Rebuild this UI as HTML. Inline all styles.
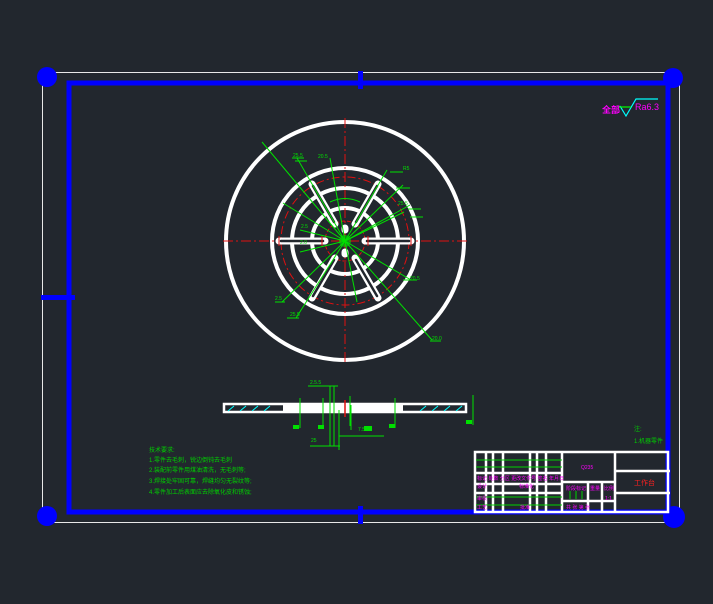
<!DOCTYPE html>
<html><head><style>html,body{margin:0;padding:0;background:#22272e;width:713px;height:604px;overflow:hidden}</style></head>
<body>
<svg width="713" height="604" viewBox="0 0 713 604" xmlns="http://www.w3.org/2000/svg" font-family="Liberation Sans, Noto Sans CJK SC, sans-serif">
<rect width="713" height="604" fill="#22272e"/>
<rect x="42.5" y="72.5" width="637" height="450" fill="none" stroke="#e8e8e8" stroke-width="1"/>
<rect x="69" y="83" width="599" height="429" fill="none" stroke="#0000ff" stroke-width="5"/>
<circle cx="47" cy="77" r="10" fill="#0000ff"/><circle cx="673" cy="78" r="10" fill="#0000ff"/>
<circle cx="47" cy="516" r="10" fill="#0000ff"/><circle cx="674" cy="517" r="11" fill="#0000ff"/>
<rect x="358" y="71" width="5" height="18" fill="#0000ff"/><rect x="358" y="506" width="5" height="18" fill="#0000ff"/>
<rect x="41" y="295" width="34" height="5" fill="#0000ff"/>
<text x="602" y="113" font-size="9" fill="#ff00ff" font-weight="bold">全部</text>
<path d="M620 106 L626 116 L636 99 L658 99" fill="none" stroke="#00ffff" stroke-width="1.2"/>
<path d="M619 107 L631 107" stroke="#00ff00" stroke-width="1.2"/>
<text x="635" y="110" font-size="9" fill="#ff00ff">Ra6.3</text>
<g fill="none">
<circle cx="345" cy="241" r="119" stroke="#fff" stroke-width="4"/>
<circle cx="345" cy="241" r="73" stroke="#fff" stroke-width="4"/>
<circle cx="345" cy="241" r="53" stroke="#fff" stroke-width="4"/>
<circle cx="345" cy="241" r="33" stroke="#fff" stroke-width="4"/>
<circle cx="345" cy="241" r="64" stroke="#e01010" stroke-width="1" stroke-dasharray="8 3 2 3"/>
<circle cx="345" cy="241" r="20" stroke="#e01010" stroke-width="1" stroke-dasharray="4 2"/>
<line x1="223" y1="241" x2="468" y2="241" stroke="#e01010" stroke-dasharray="10 3 2 3"/>
<line x1="345" y1="118" x2="345" y2="364" stroke="#e01010" stroke-dasharray="10 3 2 3"/>
</g>
<g stroke="#fff" stroke-width="7" stroke-linecap="round">
<line x1="279" y1="241" x2="325" y2="241"/><line x1="365" y1="241" x2="411" y2="241"/>
<line x1="312" y1="184" x2="335" y2="224"/><line x1="378" y1="184" x2="355" y2="224"/>
<line x1="312" y1="298" x2="335" y2="258"/><line x1="378" y1="298" x2="355" y2="258"/>
<line x1="345" y1="228" x2="345" y2="230"/><line x1="345" y1="252" x2="345" y2="254"/>
</g>
<g stroke="#22272e" stroke-width="2.5" stroke-linecap="round">
<line x1="281" y1="241" x2="323" y2="241"/><line x1="367" y1="241" x2="409" y2="241"/>
<line x1="313" y1="186" x2="334" y2="222"/><line x1="377" y1="186" x2="356" y2="222"/>
<line x1="313" y1="296" x2="334" y2="260"/><line x1="377" y1="296" x2="356" y2="260"/>
</g>
<g stroke="#e01010" stroke-width="1"><line x1="279" y1="236" x2="279" y2="246"/><line x1="411" y1="236" x2="411" y2="246"/><line x1="322" y1="236" x2="322" y2="246"/><line x1="368" y1="236" x2="368" y2="246"/></g>
<g stroke="#00e000" stroke-width="1" fill="none">
<line x1="262" y1="142" x2="345" y2="241"/><line x1="297" y1="158" x2="345" y2="241"/><line x1="330" y1="158" x2="345" y2="241"/>
<line x1="387" y1="170" x2="345" y2="241"/><line x1="403" y1="185" x2="345" y2="241"/><line x1="410" y1="205" x2="345" y2="241"/>
<line x1="404" y1="212" x2="345" y2="241"/><line x1="283" y1="203" x2="345" y2="241"/><line x1="300" y1="230" x2="345" y2="241"/>
<line x1="300" y1="252" x2="345" y2="241"/><line x1="282" y1="302" x2="345" y2="241"/><line x1="296" y1="318" x2="345" y2="241"/>
<line x1="357" y1="302" x2="345" y2="241"/><line x1="411" y1="280" x2="345" y2="241"/><line x1="432" y1="340" x2="345" y2="241"/>
<path d="M292 158h12M295 161h12M390 172h13M396 188h14M408 209h13M410 217h13M403 280h14M275 302h10M287 318h12M430 341h11"/>
<path d="M330 202 Q345 195 360 202"/>
</g>
<g font-size="5" fill="#00e000"><text x="293" y="157">25.5</text><text x="318" y="158">20.5</text><text x="403" y="170">R5</text><text x="398" y="205">25.5</text><text x="301" y="228">2.5</text><text x="300" y="244">2.0</text><text x="275" y="300">2.5</text><text x="290" y="316">25.5</text><text x="410" y="280">20.5</text><text x="432" y="340">20.0</text></g>
<circle cx="345" cy="241" r="6" fill="#00e000" opacity=".6"/>
<rect x="224" y="404" width="242" height="8" fill="none" stroke="#fff" stroke-width="2.5"/>
<rect x="283" y="404" width="120" height="8" fill="#fff"/>
<g stroke="#00ffff" stroke-width="1"><path d="M228 411l6-5M240 411l6-5M252 411l6-5M264 411l6-5M420 411l6-5M432 411l6-5M444 411l6-5M456 411l6-5"/></g>
<g stroke="#00e000" stroke-width="1" fill="none"><path d="M300 398v30M323 398v30M330 386v60M334 386v60M339 410v40M351 405v25M350 396v30M395 398v30M473 395v30M308 386h30M310 446h30M339 436h45"/></g>
<line x1="345" y1="400" x2="345" y2="417" stroke="#e01010" stroke-width="1.5"/>
<g fill="#00e000"><rect x="293" y="425" width="6" height="4"/><rect x="318" y="425" width="6" height="4"/><rect x="389" y="424" width="6" height="4"/><rect x="466" y="420" width="6" height="4"/><rect x="364" y="426" width="8" height="5"/></g>
<g font-size="5" fill="#00e000"><text x="310" y="384">2.5.5</text><text x="311" y="442">25</text><text x="358" y="431">7.5</text></g>
<g font-size="6" fill="#00d000"><text x="149" y="452">技术要求:</text><text x="149" y="462">1.零件去毛刺，锐边倒钝去毛刺</text><text x="149" y="472">2.装配前零件用煤油清洗，无毛刺等;</text><text x="149" y="483">3.焊接处牢固可靠，焊缝均匀无裂纹等;</text><text x="149" y="494">4.零件加工后表面应去除氧化皮和锈蚀;</text>
<text x="634" y="431">注:</text><text x="634" y="443">1.机器零件</text></g>
<g stroke="#fff" stroke-width="2.5" fill="none">
<rect x="475" y="452" width="193" height="60"/>
<line x1="562" y1="452" x2="562" y2="512"/><line x1="615" y1="452" x2="615" y2="512"/>
<line x1="615" y1="471" x2="670" y2="471"/><line x1="615" y1="493" x2="670" y2="493"/>
<line x1="562" y1="482" x2="615" y2="482"/><line x1="562" y1="501" x2="615" y2="501"/>
<line x1="475" y1="473" x2="562" y2="473"/><line x1="475" y1="484" x2="562" y2="484"/><line x1="475" y1="493" x2="562" y2="493"/>
<path d="M486 452v60M493 452v60M503 452v60M530 452v60M537 452v60M546 452v60M588 482v30M602 482v30"/>
</g>
<g stroke="#00d000" stroke-width="1"><path d="M476 460h86M476 467h86M476 497h86M476 505h86M570 491v8M576 491v8M582 491v8"/></g>
<g font-size="5" fill="#ff00ff"><text x="581" y="469">Q235</text><text x="477" y="480">标记 处数 分区 更改文件号 签名 年月日</text><text x="477" y="488">设计</text><text x="519" y="488">标准化</text><text x="477" y="500">审核</text><text x="477" y="509">工艺</text><text x="520" y="509">批准</text><text x="566" y="490">阶段标记</text><text x="590" y="490">重量</text><text x="604" y="490">比例</text><text x="605" y="500">1:1</text><text x="566" y="509">共 张 第 张</text></g>
<text x="634" y="485" font-size="7" fill="#ff2020">工作台</text>
</svg>
</body></html>
